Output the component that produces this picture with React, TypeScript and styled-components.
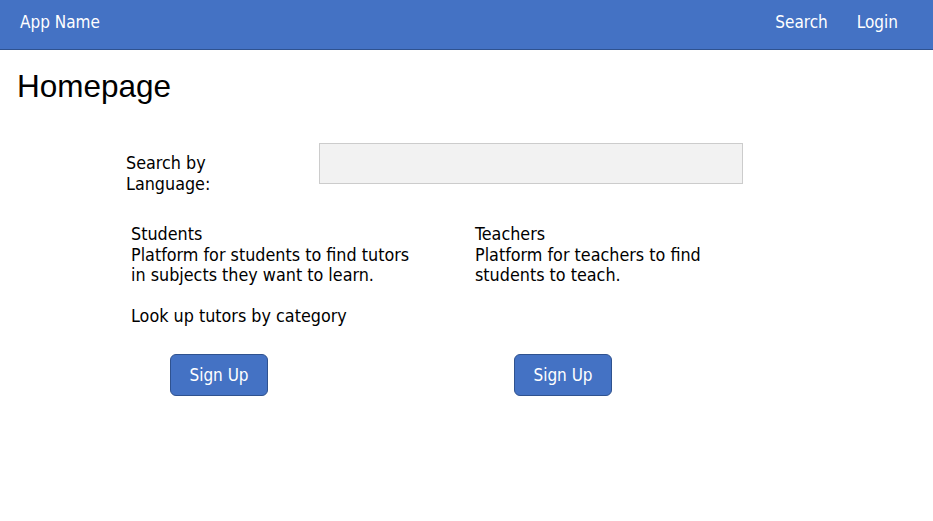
import React from "react";
import styled, { createGlobalStyle } from "styled-components";

const Global = createGlobalStyle`
  html, body { margin: 0; padding: 0; background: #ffffff; }
  body { font-family: "DejaVu Sans Condensed", "DejaVu Sans", sans-serif; color: #000; }
  * { box-sizing: border-box; }
`;

const NavBar = styled.header`
  height: 50px;
  background: #4472c4;
  border-bottom: 1px solid #2f528f;
  display: flex;
  align-items: center;
  justify-content: space-between;
  padding: 0 35px 0 20px;
  color: #ffffff;
  font-size: 17px;
`;

const Brand = styled.div`
  padding-bottom: 5px;
`;

const NavLinks = styled.nav`
  display: flex;
  gap: 29px;
  padding-bottom: 5px;
`;

const NavLink = styled.span``;

const Title = styled.h1`
  margin: 18px 0 0 17px;
  font-family: "Liberation Sans", Arial, sans-serif;
  font-weight: 400;
  font-size: 31.5px;
  line-height: 36px;
`;

const Content = styled.main`
  padding-left: 126px;
  font-size: 17.8px;
  line-height: 20.5px;
`;

const SearchRow = styled.div`
  display: flex;
  align-items: flex-start;
  margin-top: 39px;
`;

const SearchLabel = styled.label`
  width: 193px;
  margin-top: 10px;
`;

const SearchInput = styled.div`
  width: 424px;
  height: 41px;
  background: #f2f2f2;
  border: 1px solid #cccccc;
`;

const Columns = styled.div`
  display: grid;
  grid-template-columns: 344px 344px;
  padding-left: 5px;
  margin-top: 30px;
`;

const Column = styled.section`
  display: flex;
  flex-direction: column;
  align-items: flex-start;
`;

const Text = styled.p`
  margin: 0;
`;

const Button = styled.button`
  margin: 27px 0 0 39px;
  margin-top: auto;
  width: 98px;
  height: 42px;
  background: #4472c4;
  border: 1px solid #2f528f;
  border-radius: 6px;
  color: #ffffff;
  font-family: "DejaVu Sans Condensed", "DejaVu Sans", sans-serif;
  font-size: 17px;
  padding: 0;
`;

const ButtonSpacer = styled.div`
  height: 27px;
`;

export default function App() {
  return (
    <>
      <Global />
      <NavBar>
        <Brand>App Name</Brand>
        <NavLinks>
          <NavLink>Search</NavLink>
          <NavLink>Login</NavLink>
        </NavLinks>
      </NavBar>
      <Title>Homepage</Title>
      <Content>
        <SearchRow>
          <SearchLabel>
            Search by
            <br />
            Language:
          </SearchLabel>
          <SearchInput />
        </SearchRow>
        <Columns>
          <Column>
            <Text>
              Students
              <br />
              Platform for students to find tutors
              <br />
              in subjects they want to learn.
              <br />
              <br />
              Look up tutors by category
            </Text>
            <ButtonSpacer />
            <Button>Sign Up</Button>
          </Column>
          <Column>
            <Text>
              Teachers
              <br />
              Platform for teachers to find
              <br />
              students to teach.
            </Text>
            <ButtonSpacer />
            <Button>Sign Up</Button>
          </Column>
        </Columns>
      </Content>
    </>
  );
}
